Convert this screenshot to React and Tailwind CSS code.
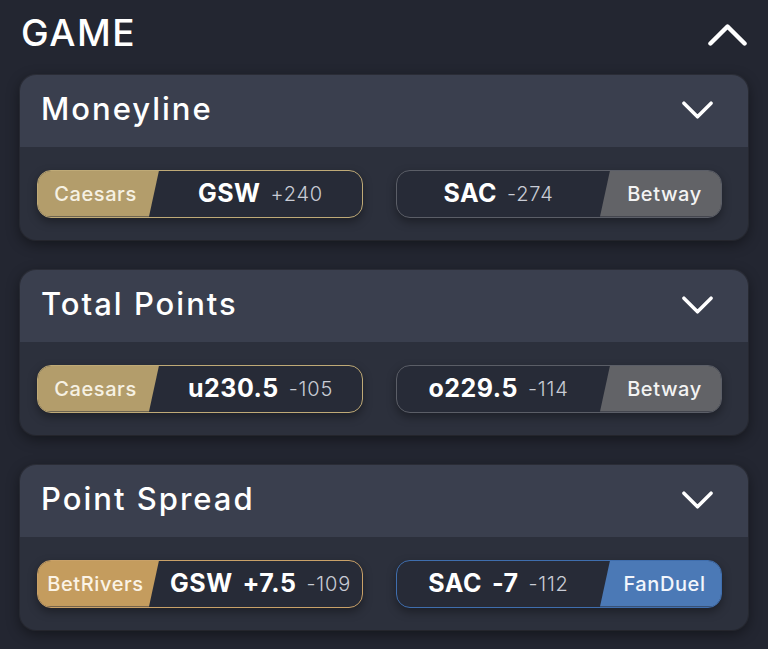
import React from 'react'

// Game odds panel: moneyline, totals and spread, each with best price per side

const books = {
  Caesars: { bg: 'bg-[#b39d6b]', border: 'border-[#bfaa77]', text: 'text-[#f6f1e3]' },
  Betway: { bg: 'bg-[#626367]', border: 'border-[#5b5e67]', text: 'text-[#f3f3f3]' },
  BetRivers: { bg: 'bg-[#c49c5e]', border: 'border-[#c9a168]', text: 'text-[#fbf3e6]' },
  FanDuel: { bg: 'bg-[#4b79b6]', border: 'border-[#3f6eae]', text: 'text-[#f2f6fc]' },
}

const markets = [
  {
    title: 'Moneyline',
    home: { book: 'Caesars', label: ['GSW'], price: '+240' },
    away: { book: 'Betway', label: ['SAC'], price: '-274' },
  },
  {
    title: 'Total Points',
    home: { book: 'Caesars', label: ['u230.5'], price: '-105' },
    away: { book: 'Betway', label: ['o229.5'], price: '-114' },
  },
  {
    title: 'Point Spread',
    home: { book: 'BetRivers', label: ['GSW', '+7.5'], price: '-109' },
    away: { book: 'FanDuel', label: ['SAC', '-7'], price: '-112' },
  },
]

const Chevron = ({ up, className }) => (
  <svg viewBox="0 0 32 18" className={className} fill="none" stroke="currentColor" strokeWidth="3.6" strokeLinecap="round" strokeLinejoin="round">
    {up ? <polyline points="2,16 16,2 30,16" /> : <polyline points="2,2 16,16 30,2" />}
  </svg>
)

const Line = ({ label, price }) => (
  <div className="flex-1 flex items-center justify-center gap-[10px]">
    {label.map(l => (
      <span key={l} className="text-[25px] font-bold tracking-[0.5px] text-white leading-none">{l}</span>
    ))}
    <span className="text-[20px] font-light tracking-[0.8px] text-[#c9ccd5] leading-none">{price}</span>
  </div>
)

const Pick = ({ side, book, label, price }) => {
  const b = books[book]
  const tag = (
    <div
      className={`w-[121px] h-full flex items-center justify-center ${b.bg} ${b.text} text-[20px] font-medium tracking-[0.6px] ${
        side === 'left'
          ? '[clip-path:polygon(0_0,100%_0,calc(100%-10px)_100%,0_100%)] pr-[6px]'
          : '[clip-path:polygon(10px_0,100%_0,100%_100%,0_100%)] pl-[8px]'
      }`}
    >
      {book}
    </div>
  )
  return (
    <div className={`w-[326px] h-[48px] rounded-[14px] border-[1.5px] ${b.border} bg-[#272b37] overflow-hidden flex shadow-[0_4px_10px_rgba(0,0,0,0.35)]`}>
      {side === 'left' && tag}
      <Line label={label} price={price} />
      {side === 'right' && tag}
    </div>
  )
}

export default function App() {
  return (
    <div className="w-[768px] h-[649px] bg-[#232631] px-[20px] text-white font-['Inter',sans-serif] overflow-hidden">
      <div className="h-[64px] mb-[11px] flex items-center justify-between pl-[1px]">
        <h1 className="text-[37px] font-medium tracking-[1.5px] leading-none">GAME</h1>
        <Chevron up className="w-[39px] h-[22px] mt-[6px] mr-[1px]" />
      </div>

      <div className="flex flex-col gap-[30px]">
        {markets.map(m => (
          <div key={m.title} className="rounded-[16px] overflow-hidden shadow-[0_4px_14px_rgba(0,0,0,0.45)] ring-1 ring-white/5">
            <div className="h-[72px] bg-[#3a3f4e] flex items-center justify-between pl-[21px] pr-[35px]">
              <span className="text-[31px] font-medium tracking-[2px] leading-none mb-[5px]">{m.title}</span>
              <Chevron className="w-[31px] h-[18px] mb-[2px]" />
            </div>
            <div className="h-[93px] bg-[#2c303c] flex items-center pl-[17px] gap-[33px]">
              <Pick side="left" {...m.home} />
              <Pick side="right" {...m.away} />
            </div>
          </div>
        ))}
      </div>
    </div>
  )
}
